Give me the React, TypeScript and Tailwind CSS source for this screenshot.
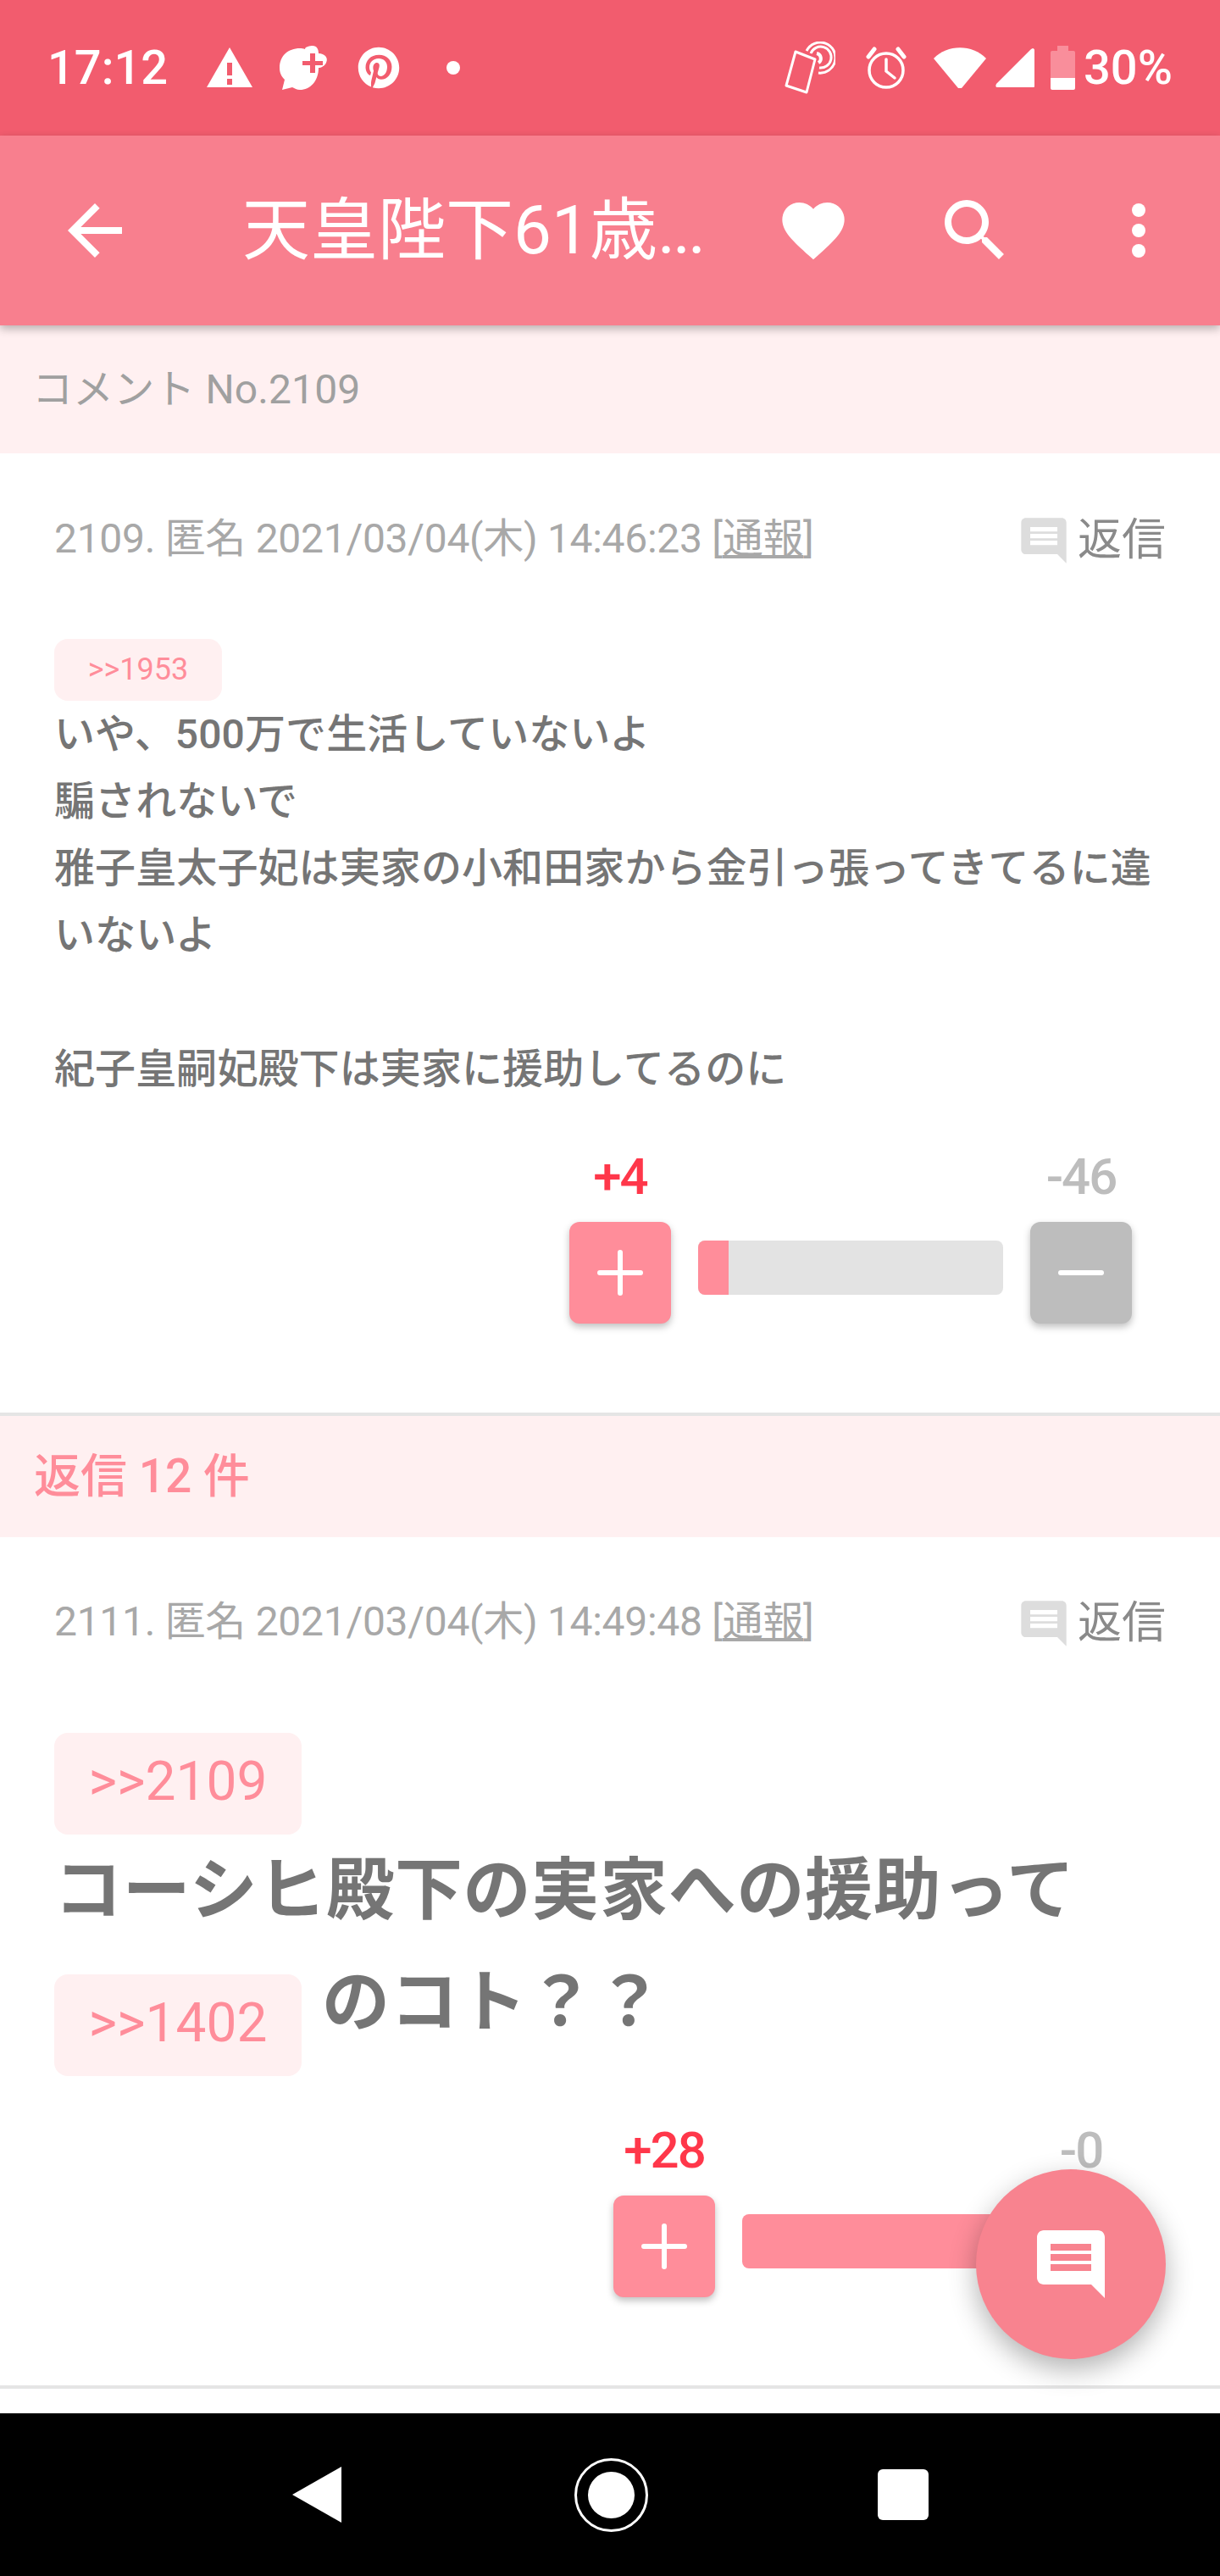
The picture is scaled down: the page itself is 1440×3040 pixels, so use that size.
import { FaPinterest } from 'react-icons/fa';

const ReplyIcon = () => (
  <svg viewBox="0 0 24 24" className="h-16 w-16 fill-[#dddddd]">
    <path d="M20 2H4c-1.1 0-2 .9-2 2v12c0 1.1.9 2 2 2h14l4 4V4c0-1.1-.9-2-2-2zm-2 12H6v-2h12v2zm0-3H6V9h12v2zm0-3H6V6h12v2z" />
  </svg>
);

const StatusBar = () => (
  <div className="flex h-[160px] shrink-0 items-center bg-[#f25c6e] text-white">
    <span className="ml-[56px] w-[188px] text-[56px] font-medium leading-none">17:12</span>
    <svg viewBox="0 0 54 48" className="h-[48px] w-[54px] fill-white">
      <path d="M27 0 L54 47 H0 Z M24 18 V33 H30 V18 Z M24 37 V44 H30 V37 Z" fillRule="evenodd" />
    </svg>
    <svg viewBox="0 0 58 52" className="ml-[32px] h-[52px] w-[58px] fill-white">
      <path d="M0 26 C0 12 10 3 24 3 C26 3 28 3 30 4 C30 1 36 0 39 0 C44 0 46 4 46 9 C53 9 58 14 55 20 C53 24 49 26 46 26 C46 42 36 52 24 52 C20 52 18 50 15 49 L3 52 L6 40 C2 36 0 32 0 26 Z" />
      <path d="M36 9 H42 V18 H51 V23 H42 V32 H36 V23 H27 V18 H36 Z" fill="#f25c6e" />
    </svg>
    <FaPinterest className="ml-[34px] h-[50px] w-[50px] text-white" />
    <span className="ml-[55px] h-4 w-4 rounded-full bg-white" />

    <svg viewBox="0 0 60 62" className="ml-[383px] h-[62px] w-[60px] fill-none stroke-white stroke-[3]">
      <path d="M13 12 L36 21 L26 60 L2 52 Z" strokeLinejoin="round" />
      <path d="M26 11 A18 18 0 1 1 40 37" />
      <path d="M31 14 A12.5 12.5 0 1 1 41 31" />
      <path d="M38 14 A6 6 0 0 1 40 25" strokeWidth="4" />
    </svg>
    <svg viewBox="0 0 48 50" className="ml-[36px] h-[50px] w-[48px] fill-none stroke-white stroke-[3.5]" strokeLinecap="round">
      <circle cx="24" cy="28" r="20" />
      <path d="M24 15 V29 L34 37" />
      <path d="M3 12 L10 3 M45 12 L38 3" strokeWidth="5" />
    </svg>
    <svg viewBox="0 0 62 48" className="ml-[32px] h-[48px] w-[62px] fill-white">
      <path d="M0 13 C16 -4 46 -4 62 13 L33 48 H29 Z" />
    </svg>
    <svg viewBox="0 0 46 46" className="ml-[11px] h-[46px] w-[46px] fill-white">
      <path d="M44 0 C45 0 46 1 46 2 V45 C46 46 45 46 44 46 H2 C0 46 0 44 1 42 L42 1 Z" />
    </svg>
    <div className="ml-[19px] flex h-[52px] w-[29px] flex-col items-center">
      <div className="h-[6px] w-[13px] bg-[#f98e9b]" />
      <div className="h-[32px] w-full rounded-t-[2px] bg-[#f98e9b]" />
      <div className="h-[14px] w-full rounded-b-[2px] bg-white" />
    </div>
    <span className="ml-[10px] text-[56px] font-medium leading-none">30%</span>
  </div>
);

const AppBar = () => (
  <div className="relative z-10 flex h-[224px] shrink-0 items-center bg-[#f87f8e] text-white shadow-[0_4px_10px_rgba(0,0,0,0.28)]">
    <svg viewBox="0 0 24 24" className="ml-[64px] h-24 w-24 fill-white">
      <path d="M20 11H7.83l5.59-5.59L12 4l-8 8 8 8 1.41-1.41L7.83 13H20v-2z" />
    </svg>
    <span className="ml-[126px] w-[630px] whitespace-nowrap text-[80px] leading-none">
      天皇陛下61歳<span className="tracking-[-3px]">...</span>
    </span>
    <svg viewBox="0 0 24 24" className="h-[88px] w-[88px] fill-white">
      <path d="M12 21.35l-1.45-1.32C5.4 15.36 2 12.28 2 8.5 2 5.42 4.42 3 7.5 3c1.74 0 3.41.81 4.5 2.09C13.09 3.81 14.76 3 16.5 3 19.58 3 22 5.42 22 8.5c0 3.78-3.4 6.86-8.55 11.54L12 21.35z" />
    </svg>
    <svg viewBox="0 0 24 24" className="ml-[99px] h-24 w-24 fill-white">
      <path d="M15.5 14h-.79l-.28-.27C15.41 12.59 16 11.11 16 9.5 16 5.91 13.09 3 9.5 3S3 5.91 3 9.5 5.91 16 9.5 16c1.61 0 3.09-.59 4.23-1.57l.27.28v.79l5 4.99L20.49 19l-4.99-5zm-6 0C7.01 14 5 11.99 5 9.5S7.01 5 9.5 5 14 7.01 14 9.5 11.99 14 9.5 14z" />
    </svg>
    <div className="ml-[137px] flex flex-col gap-2">
      <span className="h-4 w-4 rounded-full bg-white" />
      <span className="h-4 w-4 rounded-full bg-white" />
      <span className="h-4 w-4 rounded-full bg-white" />
    </div>
  </div>
);

const Meta = ({ text }: { text: string }) => (
  <div className="flex items-center justify-between px-16 text-[48px] leading-[64px] tracking-[-0.3px] text-[#a8a8a8]">
    <span className="whitespace-nowrap">
      {text} [<span className="underline">通報</span>]
    </span>
    <span className="mt-1 flex items-center gap-[8px] text-[52px] tracking-normal text-[#8a8a8a]">
      <ReplyIcon />
      返信
    </span>
  </div>
);

const Votes = ({ up, down, fill, barWidth }: { up: string; down: string; fill: number; barWidth: number }) => (
  <div className="flex justify-end gap-8 pr-[104px]">
    <div className="flex w-[120px] flex-col items-center">
      <span className="whitespace-nowrap pt-[3px] text-[60px] font-medium leading-[80px] tracking-[-2px] text-[#ff374a]">{up}</span>
      <div className="mt-[13px] flex h-[120px] w-[120px] items-center justify-center rounded-[12px] bg-[#ff8d9a] shadow-[0_4px_8px_rgba(0,0,0,0.25)]">
        <svg viewBox="0 0 54 54" className="h-[54px] w-[54px] stroke-white stroke-[6]" strokeLinecap="round">
          <path d="M27 3 V51 M3 27 H51" />
        </svg>
      </div>
    </div>
    <div className="mt-[118px] h-16 overflow-hidden rounded-[8px] bg-[#e3e3e3]" style={{ width: barWidth }}>
      <div className="h-full bg-[#ff8d9a]" style={{ width: `${fill}%` }} />
    </div>
    <div className="flex w-[120px] flex-col items-center">
      <span className="whitespace-nowrap pt-[3px] text-[60px] font-medium leading-[80px] tracking-[-2px] text-[#bdbdbd]">{down}</span>
      <div className="mt-[13px] flex h-[120px] w-[120px] items-center justify-center rounded-[12px] bg-[#bdbdbd] shadow-[0_4px_8px_rgba(0,0,0,0.25)]">
        <svg viewBox="0 0 54 54" className="h-[54px] w-[54px] stroke-white stroke-[6]" strokeLinecap="round">
          <path d="M3 27 H51" />
        </svg>
      </div>
    </div>
  </div>
);

export default function App() {
  return (
    <div className="relative flex h-[3040px] w-[1440px] flex-col overflow-hidden bg-white font-['Roboto','Noto_Sans_CJK_JP',sans-serif]">
      <StatusBar />
      <AppBar />
      <div className="flex-1 overflow-hidden">
        <div className="flex h-[151px] items-center bg-[#fff0f1] pl-[38px] text-[48px] tracking-[0.1px] text-[#a0a0a0]">コメント No.2109</div>

        <div className="h-[1136px] border-b-4 border-[#e5e5e5] pt-[67px]">
          <Meta text="2109. 匿名 2021/03/04(木) 14:46:23" />
          <div className="px-16 pt-[84px]">
            <span className="block h-[73px] w-[198px] rounded-[16px] bg-[#fff0f1] text-center text-[36px] leading-[72px] text-[#ff8d9a]">&gt;&gt;1953</span>
            <p className="text-[48px] font-medium leading-[79px] tracking-[0.1px] text-[#757575]">
              いや、500万で生活していないよ
              <br />
              騙されないで
              <br />
              雅子皇太子妃は実家の小和田家から金引っ張ってきてるに違いないよ
              <br />
              <br />
              紀子皇嗣妃殿下は実家に援助してるのに
            </p>
          </div>
          <div className="pt-[45px]">
            <Votes up="+4" down="-46" fill={10} barWidth={360} />
          </div>
        </div>

        <div className="flex h-[143px] items-center bg-[#fff0f1] pl-10 text-[55px] font-medium text-[#ff8d9a]">返信 12 件</div>

        <div className="h-[1005px] border-b-4 border-[#e5e5e5] pt-[66px]">
          <Meta text="2111. 匿名 2021/03/04(木) 14:49:48" />
          <div className="px-16 pt-[97px]">
            <span className="block h-[120px] w-[292px] rounded-[16px] bg-[#fff0f1] text-center text-[64px] leading-[116px] text-[#ff8d9a]">&gt;&gt;2109</span>
            <p className="text-[80px] font-bold leading-[132px] tracking-[0.7px] text-[#757575]">コーシヒ殿下の実家への援助って</p>
            <p className="text-[80px] font-bold leading-[132px] tracking-[0.7px] text-[#757575]">
              <span className="mr-6 inline-block h-[120px] w-[292px] rounded-[16px] bg-[#fff0f1] text-center align-[-19px] text-[64px] font-normal leading-[116px] tracking-normal text-[#ff8d9a]">&gt;&gt;1402</span>
              のコト？？
            </p>
          </div>
          <div className="pt-[45px]">
            <Votes up="+28" down="-0" fill={100} barWidth={308} />
          </div>
        </div>
      </div>

      <div className="flex h-[192px] shrink-0 items-center justify-center bg-black">
        <svg viewBox="0 0 58 66" className="mr-[275px] h-[66px] w-[58px] fill-white">
          <path d="M58 0 V66 L0 33 Z" />
        </svg>
        <span className="flex h-[87px] w-[87px] items-center justify-center rounded-full border-[3px] border-white">
          <span className="h-[55px] w-[55px] rounded-full bg-white" />
        </span>
        <span className="ml-[271px] h-[60px] w-[60px] rounded-[6px] bg-white" />
      </div>

      <div className="absolute left-[1152px] top-[2560px] flex h-[224px] w-[224px] items-center justify-center rounded-full bg-[#f8838f] shadow-[0_12px_32px_rgba(0,0,0,0.3)]">
        <svg viewBox="0 0 24 24" className="h-24 w-24 fill-white">
          <path d="M20 2H4c-1.1 0-2 .9-2 2v12c0 1.1.9 2 2 2h14l4 4V4c0-1.1-.9-2-2-2zm-2 12H6v-2h12v2zm0-3H6V9h12v2zm0-3H6V6h12v2z" />
        </svg>
      </div>
    </div>
  );
}
